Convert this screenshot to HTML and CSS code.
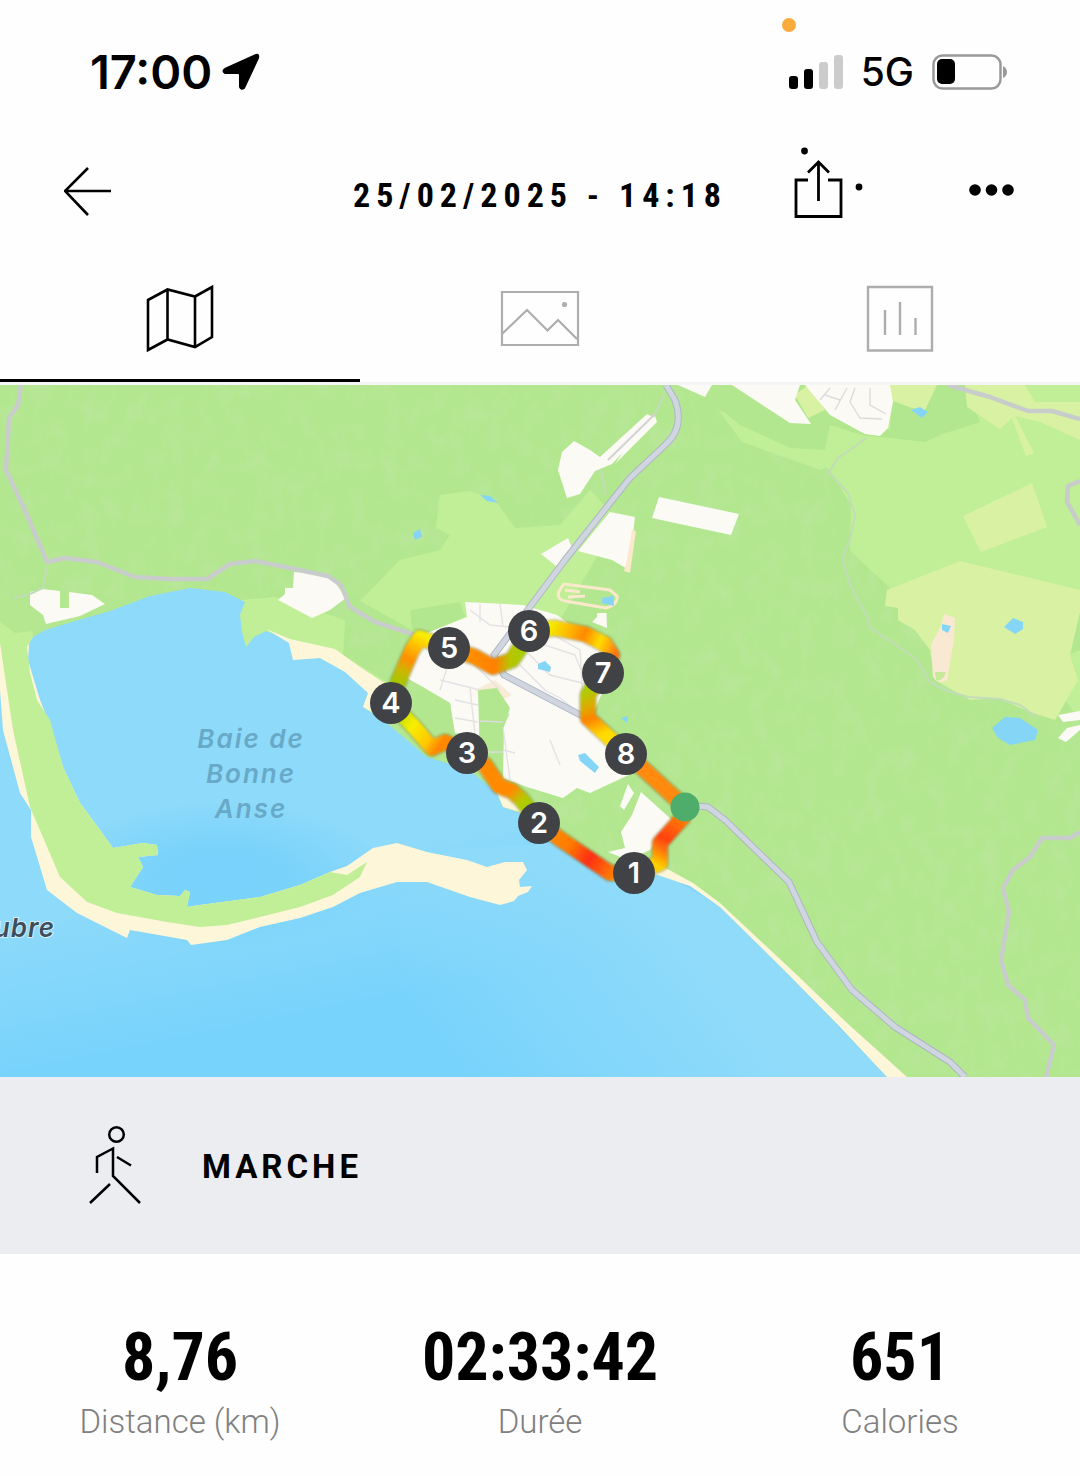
FILE: index.html
```html
<!DOCTYPE html>
<html lang="fr">
<head>
<meta charset="utf-8">
<meta name="viewport" content="width=device-width, initial-scale=1">
<title>25/02/2025 - 14:18</title>
<link rel="stylesheet" href="styles.css">
</head>
<body>
<div class="status">
  <span class="privacy-dot"></span>
  <div class="status-group">
    <span class="clock">17:00</span>
    <svg class="icon" width="38" height="38" viewBox="0 0 38 38"><path d="M34 2 3 16Q0 18 3 20H16Q18 20 18 22V34Q19 37 22 35L36 5Q37 1 34 2Z" fill="#000" stroke="#000" stroke-width="2" stroke-linejoin="round"/></svg>
  </div>
  <div class="status-group status-right">
    <svg class="icon" width="54" height="36" viewBox="0 0 54 36"><rect y="22" width="9" height="13" rx="3"/><rect x="15" y="15" width="9" height="20" rx="3"/><g fill="#ccc"><rect x="30" y="8" width="9" height="27" rx="3"/><rect x="45" y="1" width="9" height="34" rx="3"/></g></svg>
    <span class="network">5G</span>
    <svg class="icon" width="76" height="38" viewBox="0 0 76 38"><rect x="1.500" y="2.500" width="67" height="33" rx="9" fill="none" stroke="#999" stroke-width="2.500"/><rect x="5" y="6" width="18" height="25" rx="5"/><path d="M71 13Q75 15 75 19T71 25Z" fill="#999"/></svg>
  </div>
</div>

<header class="topbar">
  <button class="icon-button" aria-label="Retour"><svg class="icon" width="50" height="66" viewBox="64 150 50 66" fill="none" stroke="#000" stroke-width="2.600"><path d="M65 191H111M88 168 65 191 88 215"/></svg></button>
  <h1 class="title">25/02/2025 - 14:18</h1>
  <div class="actions">
    <button class="icon-button" aria-label="Partager"><svg class="icon" width="72" height="74" viewBox="794 146 72 74" fill="none" stroke="#000" stroke-width="2.800"><path d="M808 180H796V216.500H841V180H828M818.500 201V162M808 172.500 818.500 162 829 172.500"/><g fill="#000" stroke="none"><circle cx="804.500" cy="151" r="3.400"/><circle cx="859" cy="187" r="3.400"/></g></svg></button>
    <button class="icon-button" aria-label="Plus"><svg class="icon" width="48" height="74" viewBox="968 146 48 74"><circle cx="975" cy="190" r="5.800"/><circle cx="991.500" cy="190" r="5.800"/><circle cx="1008" cy="190" r="5.800"/></svg></button>
  </div>
</header>

<nav class="tabs">
  <button class="tab tab-active" aria-label="Carte"><svg class="icon" width="70" height="70" viewBox="145 284 70 70" fill="none" stroke="#000" stroke-width="2.600"><path d="M148 300 167.500 289.500 195 296.500 212 287V337L195 347 167.500 339.500 148 350ZM167.500 289.500V339.500M195 296.500V347"/></svg></button>
  <button class="tab" aria-label="Photos"><svg class="icon" width="80" height="70" viewBox="500 284 80 70" fill="none" stroke="#adadad" stroke-width="2.200"><path d="M502 292H578V345H502ZM502 334 527 310 547.500 330.500 558 320 577 339"/><circle cx="564.500" cy="304.500" r="2.600" fill="#adadad" stroke="none"/></svg></button>
  <button class="tab" aria-label="Statistiques"><svg class="icon" width="70" height="70" viewBox="865 284 70 70" fill="none" stroke="#adadad" stroke-width="2.400"><path d="M868 287H932V350.500H868ZM885 310V335M900 302V335M915.500 318V335"/></svg></button>
</nav>

<main>
<svg class="map" viewBox="0 385 1080 692" role="img" aria-label="Parcours">
  <defs>
    <linearGradient id="sea" gradientUnits="userSpaceOnUse" x1="300" y1="860" x2="330" y2="1010"><stop offset="0" stop-color="#8edafa"/><stop offset="1" stop-color="#78d3fc"/></linearGradient>
    <linearGradient id="sea-east" gradientUnits="userSpaceOnUse" x1="450" y1="1060" x2="660" y2="900"><stop offset="0" stop-color="#90dbfa" stop-opacity="0"/><stop offset="1" stop-color="#90dbfa"/></linearGradient>
    <radialGradient id="deep"><stop offset="0" stop-color="#78d2fb"/><stop offset=".4" stop-color="#78d2fb" stop-opacity=".9"/><stop offset="1" stop-color="#78d2fb" stop-opacity="0"/></radialGradient>
    <filter id="relief" x="0" y="0" width="1" height="1"><feTurbulence type="fractalNoise" baseFrequency="0.060 0.040" numOctaves="3" seed="8"/><feColorMatrix values="0 0 0 0 0.560  0 0 0 0 0.800  0 0 0 0 0.450  1.800 0 0 0 -0.850"/></filter>
    <filter id="soft" x="-0.200" y="-0.200" width="1.400" height="1.400"><feGaussianBlur stdDeviation="0.800"/></filter>
    <linearGradient id="leg1" gradientUnits="userSpaceOnUse" x1="684" y1="815" x2="656" y2="868"><stop offset="0" stop-color="#ff8400"/><stop offset=".5" stop-color="#ff4210"/><stop offset=".7" stop-color="#ff7a08"/><stop offset=".95" stop-color="#ffd000"/></linearGradient>
    <linearGradient id="leg2" gradientUnits="userSpaceOnUse" x1="550" y1="830" x2="620" y2="876"><stop offset="0" stop-color="#ff8c00"/><stop offset=".3" stop-color="#ff7a00"/><stop offset=".58" stop-color="#ff2e14"/><stop offset="1" stop-color="#ff9000"/></linearGradient>
    <linearGradient id="leg3" gradientUnits="userSpaceOnUse" x1="478" y1="760" x2="526" y2="810"><stop offset="0" stop-color="#ff8a00"/><stop offset=".65" stop-color="#ff8a00"/><stop offset=".85" stop-color="#b8c800"/><stop offset="1" stop-color="#a4cc00"/></linearGradient>
    <linearGradient id="leg4" gradientUnits="userSpaceOnUse" x1="400" y1="712" x2="450" y2="745"><stop offset="0" stop-color="#c0dc00"/><stop offset=".3" stop-color="#f8ee00"/><stop offset=".65" stop-color="#ffc800"/><stop offset=".85" stop-color="#ff8800"/></linearGradient>
    <linearGradient id="leg5" gradientUnits="userSpaceOnUse" x1="398" y1="685" x2="422" y2="635"><stop offset="0" stop-color="#a0c800"/><stop offset=".25" stop-color="#c8b800"/><stop offset=".5" stop-color="#ff8e00"/><stop offset=".8" stop-color="#ffc400"/><stop offset="1" stop-color="#f8ec00"/></linearGradient>
    <linearGradient id="leg6" gradientUnits="userSpaceOnUse" x1="465" y1="0" x2="525" y2="0"><stop offset="0" stop-color="#ff9200"/><stop offset=".5" stop-color="#ff8000"/><stop offset=".75" stop-color="#b8c400"/><stop offset="1" stop-color="#a4d000"/></linearGradient>
    <linearGradient id="leg7" gradientUnits="userSpaceOnUse" x1="550" y1="627" x2="616" y2="655"><stop offset="0" stop-color="#f4ec00"/><stop offset=".3" stop-color="#ffb000"/><stop offset=".48" stop-color="#ff8800"/><stop offset=".72" stop-color="#ffdc00"/><stop offset="1" stop-color="#ff7210"/></linearGradient>
    <linearGradient id="leg8" gradientUnits="userSpaceOnUse" x1="590" y1="690" x2="610" y2="740"><stop offset="0" stop-color="#b0cc00"/><stop offset=".3" stop-color="#e0a800"/><stop offset=".5" stop-color="#ff8200"/><stop offset=".85" stop-color="#ffdc00"/></linearGradient>
  </defs>

  <rect y="385" width="1080" height="692" fill="#b3e78f"/>
  <rect y="385" width="1080" height="692" filter="url(#relief)" opacity=".4"/>

  <!-- meadows -->
  <g fill="#c0ef97">
    <path d="M440 495 470 491 495 500 515 528 560 525 590 490 618 520 560 620 430 640 360 601 400 560 440 550 450 535 436 528Z"/>
    <path d="M1080 385H880L720 412 742 440 800 452 830 470 851 505 850 550 862 562 885 583 900 600 1080 600Z"/>
    <path d="M720 412 760 425 800 445 860 435 870 445 820 470 742 442ZM1080 650 1068 655 1065 700 1080 720Z"/>
    <path d="M242 600 275 597 345 620 343 655 400 690 380 710 230 660Z"/>
  </g>
  <g fill="#b3e78f"><path d="M720 385H800L890 430 893 385H965L980 422 940 435 925 442 890 438 865 436 830 425 825 450 790 448 740 425 715 405Z"/><path d="M410 610 460 602 465 617 430 632 412 630Z"/></g>
  <g fill="#d9f1a3">
    <path d="M885 385H937L925 410 912 408 885 398ZM965 385H1025L1035 402H1080V440L1040 422 1015 416 1034 453 1026 456 1012 418 1000 429 967 407ZM963 516 1032 483 1047 527 981 552ZM887 590 960 561 1080 590V612L1070 655 1078 680 1055 720 1030 712 998 698 970 700 935 680 930 650 915 630 898 620 898 608 885 606ZM795 395 808 385 825 410 808 418Z"/>
  </g>
  <path d="M0 600 28 598 45 625 30 640 25 660 0 640Z" fill="#b3e78f"/>

  <!-- sea and bay -->
  <path d="M0 640 28 640 45 630 75 621 110 611 150 596 190 588 225 592 245 602 240 615 242 632 246 647 254 637 266 631 285 638 291 645 293 658 320 658 345 670 362 682 368 693 363 707 387 723 427 757 447 763 473 773 497 793 503 807 520 813 560 843 610 880 643 893 660 870 693 886 720 907 787 973 840 1027 887 1077H0Z" fill="url(#sea)"/>
  <path d="M400 900 450 850 560 843 610 880 643 893 660 870 720 907 787 973 887 1077H400Z" fill="url(#sea-east)"/>
  <ellipse cx="220" cy="875" rx="170" ry="75" fill="url(#deep)"/>
  <path d="M0 632H30L28 660 40 700 52 730 63 767 80 803 100 830 113 848 143 843 157 845 158 855 138 857 143 867 130 887 157 895 180 896 185 890 190 892 187 907 200 905 260 897 300 885 330 872 347 866 360 857 373 848 397 843 427 852 467 860 487 867 505 862 523 862 527 870 519 880 520 887 532 886 528 892 518 896 514 901 500 905 470 897 427 882 397 882 360 893 333 907 300 918 260 927 227 940 191 945 187 940 130 930 127 938 77 913 47 890 31 837 31 810 20 793 3 730 0 690Z" fill="#fdf6d9"/>
  <path d="M0 620 33 620V637L27 647 30 673 37 700 50 720 63 767 80 803 100 830 113 848 143 843 157 845 158 855 138 857 143 867 130 887 157 895 180 896 185 890 190 892 187 907 200 905 260 897 300 885 330 872 347 875 367 862 360 877 333 895 300 907 260 917 227 925 200 927 167 922 117 913 87 902 60 877 30 807 13 730 4 670 0 643Z" fill="#c0ef97"/>
  <path d="M0 600H40L44 630 15 633 0 622Z" fill="#b5e790"/>

  <!-- beaches -->
  <g fill="#fdf6d9">
    <path d="M266 629 290 639 335 649 360 667 395 690 385 720 363 707 368 693 345 672 320 658 293 660 289 643ZM475 765 500 785 520 795 530 815 503 807 497 793ZM660 865 693 883 720 903 797 975 847 1023 907 1077H887L840 1027 787 973 720 907 690 886 655 874Z"/>
  </g>

  <!-- built-up areas -->
  <g fill="#fbfaf5">
    <path d="M30 592 42 589 60 591V608H69V592L92 595 105 604 80 616 46 624 43 615 30 605ZM294 572 330 575 346 598 330 610 312 618 278 600 285 594V588H293ZM574 441 590 450 600 457 647 414 655 418 612 464 595 471 580 494 567 498 558 470 562 452ZM623 452 655 416 657 422 615 464ZM659 497 739 514 731 535 652 518ZM541 554 568 538 572 548 556 566ZM610 512 635 517 629 570 612 560 578 551ZM678 385H712L705 397ZM732 385H800L795 400 811 424 790 423ZM805 385H890L893 402 888 428 880 436 865 434 830 415ZM1080 711 1058 715 1063 722 1080 720ZM1080 725 1067 728 1058 738 1066 742 1080 730Z"/>
    <path d="M465 602 523 605 557 615 580 632 612 650 617 660 590 720 613 737 633 773 590 793 577 788 563 798 527 787 503 778 503 727 510 713 480 737 455 733 450 703 423 687 405 677 427 633 467 617ZM592 622 597 617 598 594 606 594 607 628ZM628 784 634 793 624 810 620 806ZM641 792 672 820 650 850 628 860 608 852 625 848 621 832 632 815Z"/>
  </g>
  <path d="M632 530 636 531 630 573 624 571 627 560Z" fill="#fbe9cc"/>
  <path d="M475 690 495 680 512 695 495 703Z" fill="#faebd8"/>
  <g fill="#b3e78f"><path d="M590 590H612V613H590ZM422 688 450 703 454 733 435 735 415 705ZM478 690 497 688 510 708 504 727 503 778 480 760Z"/></g>
  <path d="M564 584Q552 598 565 601L606 608Q618 605 617 596L610 590Z" fill="none" stroke="#fbe9cc" stroke-width="3"/>
  <path d="M565 590 580 592M568 597 585 596" stroke="#fbe9cc" stroke-width="3"/>
  <path d="M944 614 955 618 954 640 947 680Q939 685 933 677L931 645 941 626Z" fill="#f9e9d2"/><path d="M935 672H946Q943 682 936 680Z" fill="#c9e99a"/>

  <!-- streets -->
  <g fill="none" stroke="#e4e2e4" stroke-width="1.400">
    <path d="M470 610 490 625 520 628M480 604V622M500 604 503 627M440 680 480 690M448 665 440 690M455 645 500 690M470 688 475 735M455 700 478 705M455 718 478 722M503 727 510 780M503 750 515 753M525 650 550 675 590 685M530 640 575 655 585 680M545 690 560 698 575 710M550 740 560 765M520 665 545 690M545 630 580 650 583 700"/>
    <path d="M480 721 503 722M480 752 503 752M820 400 830 388M835 410 847 388M825 395 840 400M855 388 850 402 860 418 882 419M870 388 870 405 886 414" stroke="#dcdcdc"/>
  </g>
  <g fill="none" stroke="#c2dcb9" stroke-width="2">
    <path d="M866 438 850 450 838 458 829 472 848 493 855 515 850 540 842 558 850 585 858 600 868 618 869 627 892 642 917 660 930 682 945 690 968 697 1000 699 1020 705 1035 716M47 567 43 588 30 594 14 598"/>
    <path d="M664 394 655 414M601 470 606 495"/>
    <path d="M655 414 608 460" stroke="#d4d2d4"/>
  </g>
  <g fill="none" stroke="#c8ccca" stroke-width="4.500" stroke-linejoin="round">
    <path d="M21 385 18 405 9 418 6 470 24 508 47 562 65 558 97 562 135 577 170 579 207 579 230 564 255 561 290 568 328 576 341 585 350 607 375 622 415 635M948 385 990 397 1028 411 1052 411 1080 419M1080 481 1068 486 1067 502 1080 525M1080 832 1070 838 1042 838 1030 857 1013 870 1003 888 1009 912 1001 960 1008 985 1025 1000 1028 1018 1054 1045 1046 1077"/>
  </g>
  <g fill="none" stroke-linejoin="round">
    <path d="M666 385 675 400Q685 428 665 445L630 478 610 503 565 560 494 655 504 675 590 720 626 753 685 805 708 807 725 820 789 882 817 942 852 990 895 1027 950 1062 965 1077" stroke="#afb6c4" stroke-width="7"/>
    <path d="M666 385 675 400Q685 428 665 445L630 478 610 503 565 560 494 655 504 675 590 720 626 753 685 805 708 807 725 820 789 882 817 942 852 990 895 1027 950 1062 965 1077" stroke="#d0d6df" stroke-width="5"/>
  </g>

  <!-- ponds -->
  <g fill="#85d5f7">
    <path d="M480 495 490 496 498 503 487 501ZM413 533 420 529 422 537 415 540ZM602 598 613 596 614 606 602 603ZM538 664 545 661 551 667 550 672 538 669ZM578 755 585 753 599 767 595 773 580 761ZM621 718 628 716 627 723ZM911 410 920 407 928 412 922 418ZM942 624 951 626 948 633 942 630ZM1004 627 1013 618 1023 622 1023 629 1015 634ZM992 728 1005 717 1020 718 1038 730 1035 740 1010 745 998 738Z"/>
  </g>

  <!-- recorded track -->
  <g fill="none" stroke="#6d7040" stroke-opacity=".35" stroke-width="18" stroke-linejoin="round" filter="url(#soft)"><path d="M685 815 660 843 660 863 634 873 610 873 560 839 539 823 522 800 512 791 499 786 485 765 467 753 445 742 432 748 415 728 391 703 399 680 412 650 420 638 449 648 475 657 493 667 512 660 522 645 529 631 555 628 585 634 605 644 612 655 602 672 588 695 588 718 626 753 685 807"/></g>
  <g fill="none" stroke-width="15" stroke-linejoin="round" stroke-linecap="round" filter="url(#soft)">
    <path d="M685 815 660 843 660 863 634 873" stroke="url(#leg1)"/>
    <path d="M634 873H610L560 839 539 823" stroke="url(#leg2)"/>
    <path d="M539 823 522 800 512 791 499 786 485 765 467 753" stroke="url(#leg3)"/>
    <path d="M467 753 445 742 432 748 415 728 391 703" stroke="url(#leg4)"/>
    <path d="M391 703 399 680 412 650 420 638 449 648" stroke="url(#leg5)"/>
    <path d="M449 648 475 657 493 667 512 660 522 645 529 631" stroke="url(#leg6)"/>
    <path d="M529 631 555 628 585 634 605 644 612 655 602 672" stroke="url(#leg7)"/>
    <path d="M602 672 588 695 588 718 626 753" stroke="url(#leg8)"/>
    <path d="M626 753 685 807" stroke="#ff8a08"/>
  </g>
  <circle cx="685" cy="807" r="14.500" fill="#4fad6b"/>
  <g class="marker-discs"><circle cx="634" cy="873" r="21"/><circle cx="539" cy="823" r="21"/><circle cx="467" cy="753" r="21"/><circle cx="391" cy="703" r="21"/><circle cx="449" cy="648" r="21"/><circle cx="529" cy="631" r="21"/><circle cx="603" cy="673" r="21"/><circle cx="626" cy="754" r="21"/></g>
  <g class="marker-labels"><text x="634" y="883">1</text><text x="539" y="833">2</text><text x="467" y="763">3</text><text x="391" y="713">4</text><text x="449" y="658">5</text><text x="529" y="641">6</text><text x="603" y="683">7</text><text x="626" y="764">8</text></g>
  <g class="sea-label"><text x="251" y="748">Baie de</text><text x="251" y="783">Bonne</text><text x="251" y="818">Anse</text></g>
  <text class="cape-label" x="55" y="937">ubre</text>
</svg>

<section class="activity">
  <svg class="icon" width="54" height="82" viewBox="88 1124 54 82" fill="none" stroke="#000" stroke-width="2.500"><circle cx="116.500" cy="1134.500" r="7.300"/><path d="M97 1173V1157L113 1148.500V1176L140 1203M117 1157 131 1165.500M110 1184 90 1203"/></svg>
  <h2 class="activity-name">MARCHE</h2>
</section>

<dl class="stats">
  <div class="stat"><dd class="value">8,76</dd><dt class="label">Distance (km)</dt></div>
  <div class="stat"><dd class="value">02:33:42</dd><dt class="label">Durée</dt></div>
  <div class="stat"><dd class="value">651</dd><dt class="label">Calories</dt></div>
</dl>
</main>
</body>
</html>
```
FILE: styles.css
```css
* { box-sizing: border-box; }
body { margin: 0; background: #fefefe; color: #000; font-family: Roboto, "Liberation Sans", sans-serif; }
.icon { display: block; flex: none; }

.status { position: relative; display: flex; justify-content: space-between; align-items: center; padding: 42px 72px 28px 90px; }
.status-group { display: flex; align-items: center; gap: 10px; }
.status-right { gap: 18px; }
.clock { font: 600 47px/60px Inter, sans-serif; }
.network { font: 500 39px/60px Inter, sans-serif; }
.privacy-dot { position: absolute; top: 18px; right: 284px; width: 14px; height: 14px; border-radius: 50%; background: #f9ab3c; }

.topbar { display: grid; grid-template-columns: 1fr auto 1fr; align-items: center; padding: 16px 64px 34px; }
.icon-button { padding: 0; border: 0; background: none; justify-self: start; }
.title { margin: 24px 0 0; font: 700 34px/40px "Roboto Condensed", "Liberation Sans Narrow", Roboto, sans-serif; letter-spacing: 6px; }
.actions { display: flex; justify-content: flex-end; gap: 102px; }

.tabs { display: grid; grid-template-columns: repeat(3, 1fr); border-bottom: 3px solid #f5f5f5; }
.tab { display: flex; justify-content: center; padding: 30px 0 25px; border: 0; border-bottom: 3px solid transparent; background: none; }
.tab-active { border-bottom-color: #000; }

.map { display: block; width: 100%; height: auto; }
.marker-discs { fill: #404246; }
.marker-labels { fill: #fff; font: 600 29px Inter, sans-serif; text-anchor: middle; }
.sea-label { fill: #68a9c8; font: italic 600 26px Inter, sans-serif; letter-spacing: 2px; text-anchor: middle; }
.cape-label { fill: #3c4d5e; stroke: #d5edf5; stroke-width: 2px; paint-order: stroke; font: italic 600 26px Inter, sans-serif; letter-spacing: 1px; text-anchor: end; }

.activity { display: flex; align-items: center; gap: 60px; padding: 47px 88px 48px; background: #ebedf1; }
.activity-name { margin: 4px 0 0; font-size: 33px; line-height: 40px; font-weight: 700; letter-spacing: 4px; }

.stats { display: grid; grid-template-columns: repeat(3, 1fr); margin: 0; padding: 64px 0 32px; text-align: center; }
.value { margin: 0; font: 700 66px/80px "Roboto Condensed", "Liberation Sans Narrow", Roboto, sans-serif; }
.label { margin-top: 4px; color: #808080; font-size: 33px; line-height: 40px; font-weight: 300; }
```
